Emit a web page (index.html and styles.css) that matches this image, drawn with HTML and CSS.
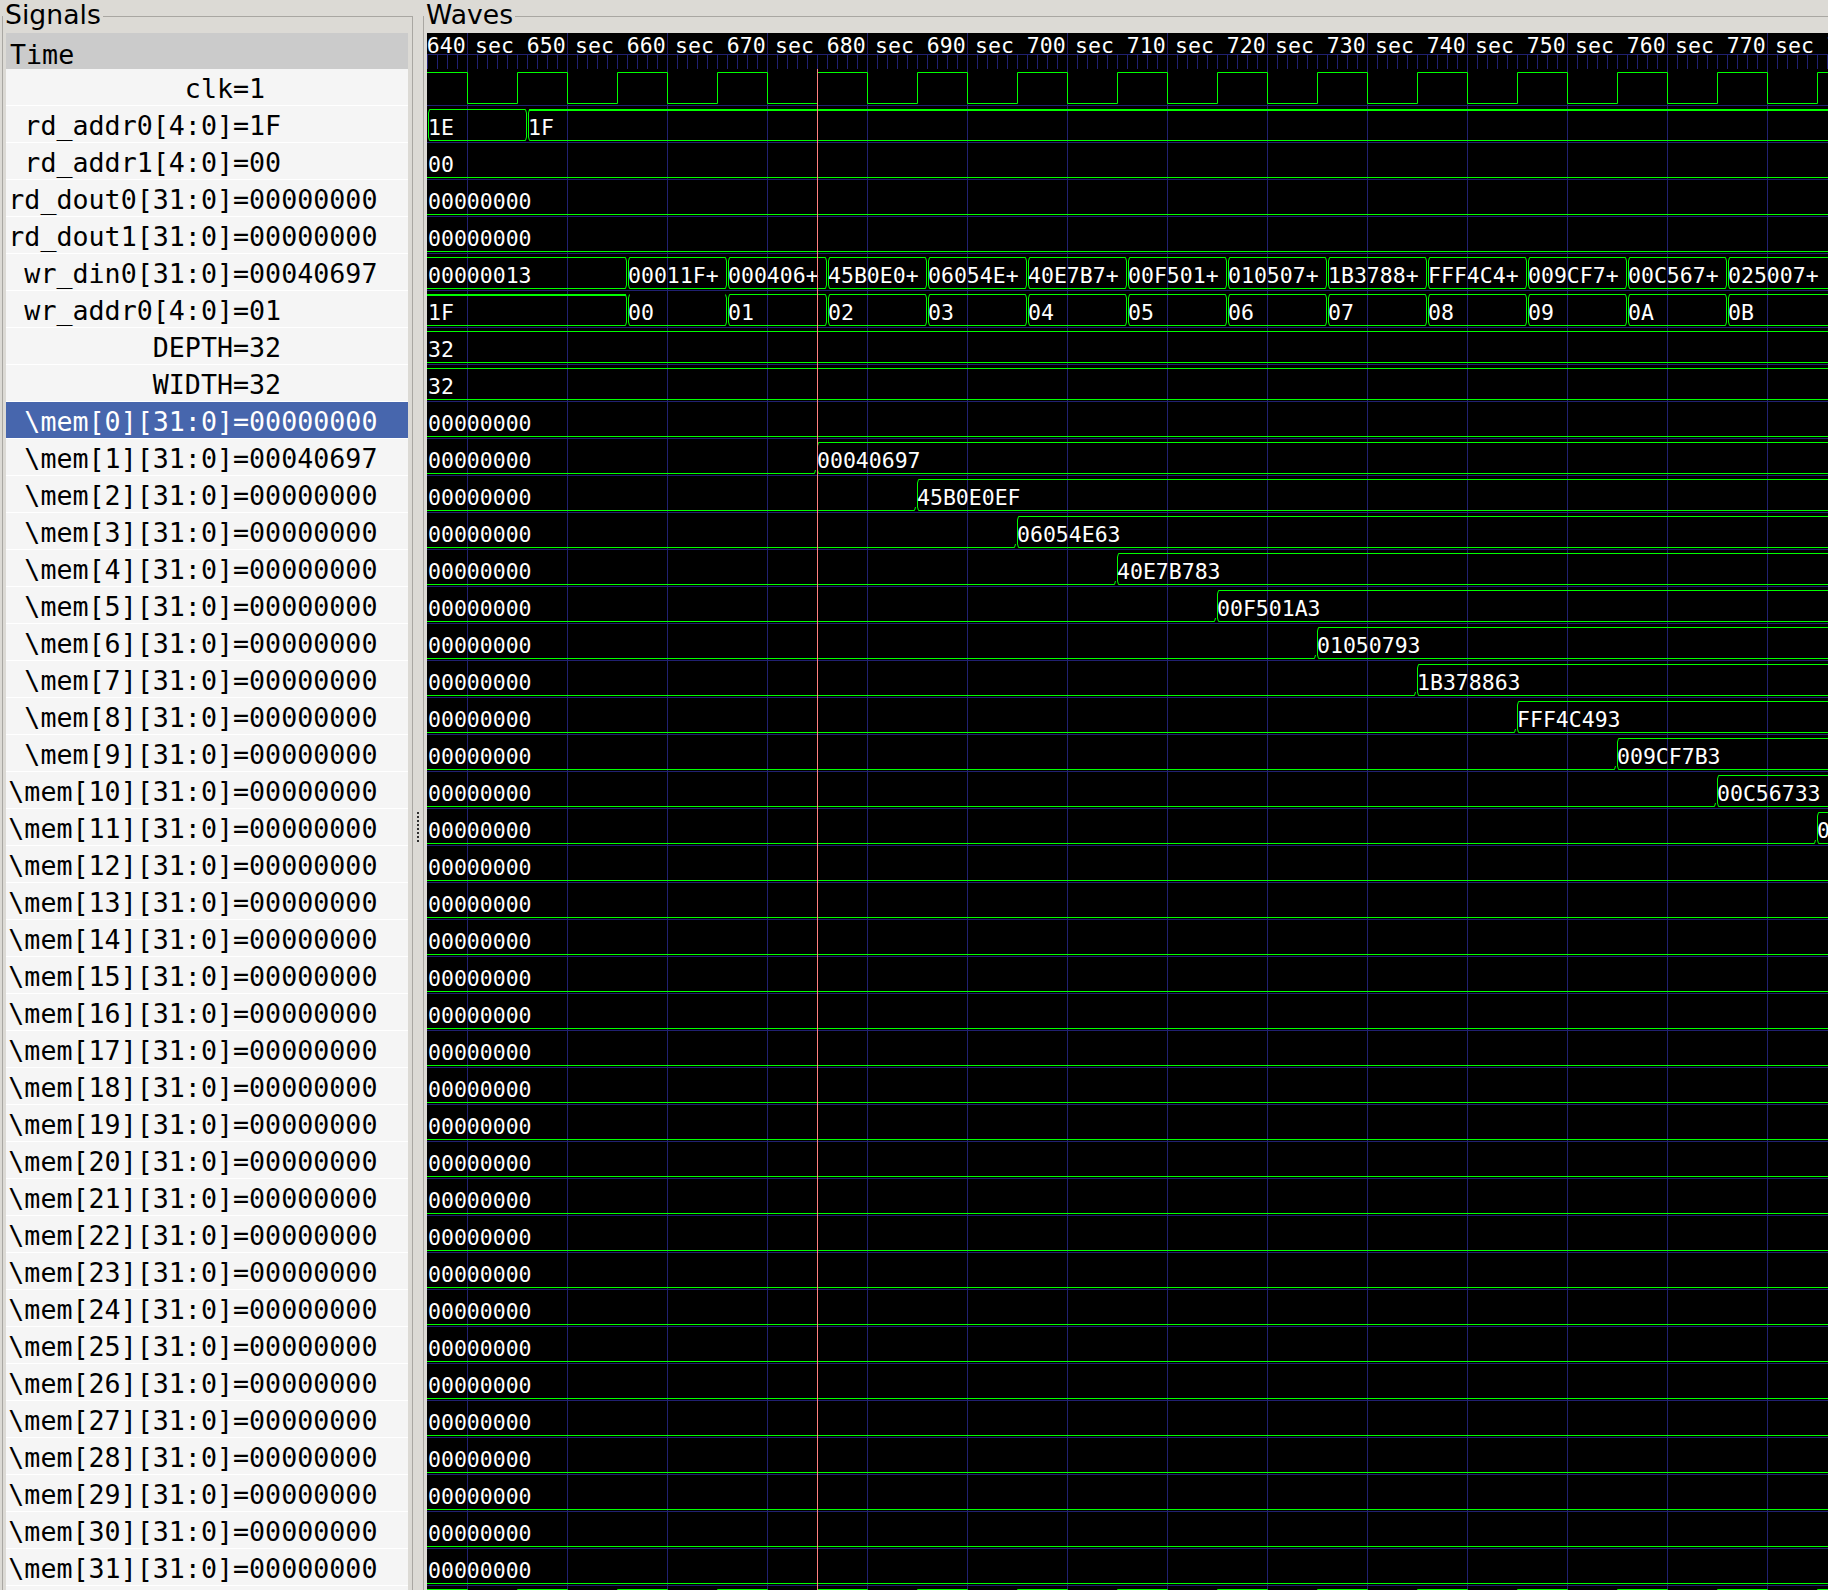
FILE: index.html
```html
<!DOCTYPE html>
<html>
<head>
<meta charset="utf-8">
<title>GTKWave</title>
<link rel="stylesheet" href="styles.css">
</head>
<body>
<div class="frame signals">
  <div class="frame-label">Signals</div>
  <div class="list">
    <div class="list-head">Time</div>
    <div class="sig"><span class="nm">clk</span><span>=1</span></div>
    <div class="sig"><span class="nm">rd_addr0[4:0]</span><span>=1F</span></div>
    <div class="sig"><span class="nm">rd_addr1[4:0]</span><span>=00</span></div>
    <div class="sig"><span class="nm">rd_dout0[31:0]</span><span>=00000000</span></div>
    <div class="sig"><span class="nm">rd_dout1[31:0]</span><span>=00000000</span></div>
    <div class="sig"><span class="nm">wr_din0[31:0]</span><span>=00040697</span></div>
    <div class="sig"><span class="nm">wr_addr0[4:0]</span><span>=01</span></div>
    <div class="sig"><span class="nm">DEPTH</span><span>=32</span></div>
    <div class="sig"><span class="nm">WIDTH</span><span>=32</span></div>
    <div class="sig sel"><span class="nm">\mem[0][31:0]</span><span>=00000000</span></div>
    <div class="sig"><span class="nm">\mem[1][31:0]</span><span>=00040697</span></div>
    <div class="sig"><span class="nm">\mem[2][31:0]</span><span>=00000000</span></div>
    <div class="sig"><span class="nm">\mem[3][31:0]</span><span>=00000000</span></div>
    <div class="sig"><span class="nm">\mem[4][31:0]</span><span>=00000000</span></div>
    <div class="sig"><span class="nm">\mem[5][31:0]</span><span>=00000000</span></div>
    <div class="sig"><span class="nm">\mem[6][31:0]</span><span>=00000000</span></div>
    <div class="sig"><span class="nm">\mem[7][31:0]</span><span>=00000000</span></div>
    <div class="sig"><span class="nm">\mem[8][31:0]</span><span>=00000000</span></div>
    <div class="sig"><span class="nm">\mem[9][31:0]</span><span>=00000000</span></div>
    <div class="sig"><span class="nm">\mem[10][31:0]</span><span>=00000000</span></div>
    <div class="sig"><span class="nm">\mem[11][31:0]</span><span>=00000000</span></div>
    <div class="sig"><span class="nm">\mem[12][31:0]</span><span>=00000000</span></div>
    <div class="sig"><span class="nm">\mem[13][31:0]</span><span>=00000000</span></div>
    <div class="sig"><span class="nm">\mem[14][31:0]</span><span>=00000000</span></div>
    <div class="sig"><span class="nm">\mem[15][31:0]</span><span>=00000000</span></div>
    <div class="sig"><span class="nm">\mem[16][31:0]</span><span>=00000000</span></div>
    <div class="sig"><span class="nm">\mem[17][31:0]</span><span>=00000000</span></div>
    <div class="sig"><span class="nm">\mem[18][31:0]</span><span>=00000000</span></div>
    <div class="sig"><span class="nm">\mem[19][31:0]</span><span>=00000000</span></div>
    <div class="sig"><span class="nm">\mem[20][31:0]</span><span>=00000000</span></div>
    <div class="sig"><span class="nm">\mem[21][31:0]</span><span>=00000000</span></div>
    <div class="sig"><span class="nm">\mem[22][31:0]</span><span>=00000000</span></div>
    <div class="sig"><span class="nm">\mem[23][31:0]</span><span>=00000000</span></div>
    <div class="sig"><span class="nm">\mem[24][31:0]</span><span>=00000000</span></div>
    <div class="sig"><span class="nm">\mem[25][31:0]</span><span>=00000000</span></div>
    <div class="sig"><span class="nm">\mem[26][31:0]</span><span>=00000000</span></div>
    <div class="sig"><span class="nm">\mem[27][31:0]</span><span>=00000000</span></div>
    <div class="sig"><span class="nm">\mem[28][31:0]</span><span>=00000000</span></div>
    <div class="sig"><span class="nm">\mem[29][31:0]</span><span>=00000000</span></div>
    <div class="sig"><span class="nm">\mem[30][31:0]</span><span>=00000000</span></div>
    <div class="sig"><span class="nm">\mem[31][31:0]</span><span>=00000000</span></div>
    <div class="sig"></div>
  </div>
</div>

<div class="handle"><div class="grip"></div></div>

<div class="frame waves">
  <div class="frame-label">Waves</div>
  <div class="canvas">
    <div class="timebar">
      <div class="tlabels"><span>sec 640</span><span>sec 650</span><span>sec 660</span><span>sec 670</span><span>sec 680</span><span>sec 690</span><span>sec 700</span><span>sec 710</span><span>sec 720</span><span>sec 730</span><span>sec 740</span><span>sec 750</span><span>sec 760</span><span>sec 770</span><span>sec 780</span></div>
      <div class="ticks"></div>
    </div>

    <div class="wrow"><svg class="wv" viewBox="427 0 1401 37" width="1401" height="37">
      <defs>
        <path id="seg" d="M2.5 3.5H98.5L99.5 7V31L98.5 34.5H2.5L1.5 31V7Z"/>
        <path id="zseg" d="M2.5 3.5L1.5 7V31L2.5 34.5H98.5L99.5 31V7L98.5 3.5"/>
      </defs>
      <path d="M420 3.5H467.5V34.5H517.5V3.5H567.5V34.5H617.5V3.5H667.5V34.5H717.5V3.5H767.5V34.5H817.5V3.5H867.5V34.5H917.5V3.5H967.5V34.5H1017.5V3.5H1067.5V34.5H1117.5V3.5H1167.5V34.5H1217.5V3.5H1267.5V34.5H1317.5V3.5H1367.5V34.5H1417.5V3.5H1467.5V34.5H1517.5V3.5H1567.5V34.5H1617.5V3.5H1667.5V34.5H1717.5V3.5H1767.5V34.5H1817.5V3.5H1830"/>
    </svg></div>

    <div class="wrow"><svg class="wv" viewBox="427 0 1401 37" width="1401" height="37">
      <use href="#seg" x="427"/>
      <path d="M1830 3.5H529.5L528.5 7V31L529.5 34.5H1830"/>
      <path class="thick" d="M529 4H1830"/>
      <text x="428" y="29">1E</text><text x="528" y="29">1F</text>
    </svg></div>

    <div class="wrow"><svg class="wv" viewBox="427 0 1401 37" width="1401" height="37">
      <path d="M420 34.5H1830"/><text x="428" y="29">00</text>
    </svg></div>
    <div class="wrow"><svg class="wv" viewBox="427 0 1401 37" width="1401" height="37">
      <path d="M420 34.5H1830"/><text x="428" y="29">00000000</text>
    </svg></div>
    <div class="wrow"><svg class="wv" viewBox="427 0 1401 37" width="1401" height="37">
      <path d="M420 34.5H1830"/><text x="428" y="29">00000000</text>
    </svg></div>

    <div class="wrow"><svg class="wv" viewBox="427 0 1401 37" width="1401" height="37">
      <path d="M420 3.5H625.5L626.5 7V31L625.5 34.5H420"/>
      <use href="#seg" x="627"/><use href="#seg" x="727"/><use href="#seg" x="827"/><use href="#seg" x="927"/><use href="#seg" x="1027"/><use href="#seg" x="1127"/><use href="#seg" x="1227"/><use href="#seg" x="1327"/><use href="#seg" x="1427"/><use href="#seg" x="1527"/><use href="#seg" x="1627"/>
      <path d="M1830 3.5H1729.5L1728.5 7V31L1729.5 34.5H1830"/>
      <text x="428" y="29">00000013</text><text x="628" y="29">00011F+</text><text x="728" y="29">000406+</text><text x="828" y="29">45B0E0+</text><text x="928" y="29">06054E+</text><text x="1028" y="29">40E7B7+</text><text x="1128" y="29">00F501+</text><text x="1228" y="29">010507+</text><text x="1328" y="29">1B3788+</text><text x="1428" y="29">FFF4C4+</text><text x="1528" y="29">009CF7+</text><text x="1628" y="29">00C567+</text><text x="1728" y="29">025007+</text>
    </svg></div>

    <div class="wrow"><svg class="wv" viewBox="427 0 1401 37" width="1401" height="37">
      <path d="M420 3.5H625.5L626.5 7V31L625.5 34.5H420"/>
      <path class="thick" d="M420 4H626"/>
      <use href="#zseg" x="627"/>
      <use href="#seg" x="727"/><use href="#seg" x="827"/><use href="#seg" x="927"/><use href="#seg" x="1027"/><use href="#seg" x="1127"/><use href="#seg" x="1227"/><use href="#seg" x="1327"/><use href="#seg" x="1427"/><use href="#seg" x="1527"/><use href="#seg" x="1627"/>
      <path d="M1830 3.5H1729.5L1728.5 7V31L1729.5 34.5H1830"/>
      <text x="428" y="29">1F</text><text x="628" y="29">00</text><text x="728" y="29">01</text><text x="828" y="29">02</text><text x="928" y="29">03</text><text x="1028" y="29">04</text><text x="1128" y="29">05</text><text x="1228" y="29">06</text><text x="1328" y="29">07</text><text x="1428" y="29">08</text><text x="1528" y="29">09</text><text x="1628" y="29">0A</text><text x="1728" y="29">0B</text>
    </svg></div>

    <div class="wrow"><svg class="wv" viewBox="427 0 1401 37" width="1401" height="37">
      <path d="M420 3.5H1830M420 34.5H1830"/><text x="428" y="29">32</text>
    </svg></div>
    <div class="wrow"><svg class="wv" viewBox="427 0 1401 37" width="1401" height="37">
      <path d="M420 3.5H1830M420 34.5H1830"/><text x="428" y="29">32</text>
    </svg></div>

    <div class="wrow"><svg class="wv" viewBox="427 0 1401 37" width="1401" height="37">
      <path d="M420 34.5H1830"/><text x="428" y="29">00000000</text>
    </svg></div>

    <div class="wrow"><svg class="wv" viewBox="427 0 1401 37" width="1401" height="37">
      <path d="M420 34.5H814.5L815.5 31"/><path d="M1830 3.5H818.5L817.5 7V31L818.5 34.5H1830"/>
      <text x="428" y="29">00000000</text><text x="817" y="29">00040697</text>
    </svg></div>
    <div class="wrow"><svg class="wv" viewBox="427 0 1401 37" width="1401" height="37">
      <path d="M420 34.5H914.5L915.5 31"/><path d="M1830 3.5H918.5L917.5 7V31L918.5 34.5H1830"/>
      <text x="428" y="29">00000000</text><text x="917" y="29">45B0E0EF</text>
    </svg></div>
    <div class="wrow"><svg class="wv" viewBox="427 0 1401 37" width="1401" height="37">
      <path d="M420 34.5H1014.5L1015.5 31"/><path d="M1830 3.5H1018.5L1017.5 7V31L1018.5 34.5H1830"/>
      <text x="428" y="29">00000000</text><text x="1017" y="29">06054E63</text>
    </svg></div>
    <div class="wrow"><svg class="wv" viewBox="427 0 1401 37" width="1401" height="37">
      <path d="M420 34.5H1114.5L1115.5 31"/><path d="M1830 3.5H1118.5L1117.5 7V31L1118.5 34.5H1830"/>
      <text x="428" y="29">00000000</text><text x="1117" y="29">40E7B783</text>
    </svg></div>
    <div class="wrow"><svg class="wv" viewBox="427 0 1401 37" width="1401" height="37">
      <path d="M420 34.5H1214.5L1215.5 31"/><path d="M1830 3.5H1218.5L1217.5 7V31L1218.5 34.5H1830"/>
      <text x="428" y="29">00000000</text><text x="1217" y="29">00F501A3</text>
    </svg></div>
    <div class="wrow"><svg class="wv" viewBox="427 0 1401 37" width="1401" height="37">
      <path d="M420 34.5H1314.5L1315.5 31"/><path d="M1830 3.5H1318.5L1317.5 7V31L1318.5 34.5H1830"/>
      <text x="428" y="29">00000000</text><text x="1317" y="29">01050793</text>
    </svg></div>
    <div class="wrow"><svg class="wv" viewBox="427 0 1401 37" width="1401" height="37">
      <path d="M420 34.5H1414.5L1415.5 31"/><path d="M1830 3.5H1418.5L1417.5 7V31L1418.5 34.5H1830"/>
      <text x="428" y="29">00000000</text><text x="1417" y="29">1B378863</text>
    </svg></div>
    <div class="wrow"><svg class="wv" viewBox="427 0 1401 37" width="1401" height="37">
      <path d="M420 34.5H1514.5L1515.5 31"/><path d="M1830 3.5H1518.5L1517.5 7V31L1518.5 34.5H1830"/>
      <text x="428" y="29">00000000</text><text x="1517" y="29">FFF4C493</text>
    </svg></div>
    <div class="wrow"><svg class="wv" viewBox="427 0 1401 37" width="1401" height="37">
      <path d="M420 34.5H1614.5L1615.5 31"/><path d="M1830 3.5H1618.5L1617.5 7V31L1618.5 34.5H1830"/>
      <text x="428" y="29">00000000</text><text x="1617" y="29">009CF7B3</text>
    </svg></div>
    <div class="wrow"><svg class="wv" viewBox="427 0 1401 37" width="1401" height="37">
      <path d="M420 34.5H1714.5L1715.5 31"/><path d="M1830 3.5H1718.5L1717.5 7V31L1718.5 34.5H1830"/>
      <text x="428" y="29">00000000</text><text x="1717" y="29">00C56733</text>
    </svg></div>
    <div class="wrow"><svg class="wv" viewBox="427 0 1401 37" width="1401" height="37">
      <path d="M420 34.5H1814.5L1815.5 31"/><path d="M1830 3.5H1818.5L1817.5 7V31L1818.5 34.5H1830"/>
      <text x="428" y="29">00000000</text><text x="1817" y="29">0</text>
    </svg></div>

    <div class="wrow"><svg class="wv" viewBox="427 0 1401 37" width="1401" height="37"><path d="M420 34.5H1830"/><text x="428" y="29">00000000</text></svg></div>
    <div class="wrow"><svg class="wv" viewBox="427 0 1401 37" width="1401" height="37"><path d="M420 34.5H1830"/><text x="428" y="29">00000000</text></svg></div>
    <div class="wrow"><svg class="wv" viewBox="427 0 1401 37" width="1401" height="37"><path d="M420 34.5H1830"/><text x="428" y="29">00000000</text></svg></div>
    <div class="wrow"><svg class="wv" viewBox="427 0 1401 37" width="1401" height="37"><path d="M420 34.5H1830"/><text x="428" y="29">00000000</text></svg></div>
    <div class="wrow"><svg class="wv" viewBox="427 0 1401 37" width="1401" height="37"><path d="M420 34.5H1830"/><text x="428" y="29">00000000</text></svg></div>
    <div class="wrow"><svg class="wv" viewBox="427 0 1401 37" width="1401" height="37"><path d="M420 34.5H1830"/><text x="428" y="29">00000000</text></svg></div>
    <div class="wrow"><svg class="wv" viewBox="427 0 1401 37" width="1401" height="37"><path d="M420 34.5H1830"/><text x="428" y="29">00000000</text></svg></div>
    <div class="wrow"><svg class="wv" viewBox="427 0 1401 37" width="1401" height="37"><path d="M420 34.5H1830"/><text x="428" y="29">00000000</text></svg></div>
    <div class="wrow"><svg class="wv" viewBox="427 0 1401 37" width="1401" height="37"><path d="M420 34.5H1830"/><text x="428" y="29">00000000</text></svg></div>
    <div class="wrow"><svg class="wv" viewBox="427 0 1401 37" width="1401" height="37"><path d="M420 34.5H1830"/><text x="428" y="29">00000000</text></svg></div>
    <div class="wrow"><svg class="wv" viewBox="427 0 1401 37" width="1401" height="37"><path d="M420 34.5H1830"/><text x="428" y="29">00000000</text></svg></div>
    <div class="wrow"><svg class="wv" viewBox="427 0 1401 37" width="1401" height="37"><path d="M420 34.5H1830"/><text x="428" y="29">00000000</text></svg></div>
    <div class="wrow"><svg class="wv" viewBox="427 0 1401 37" width="1401" height="37"><path d="M420 34.5H1830"/><text x="428" y="29">00000000</text></svg></div>
    <div class="wrow"><svg class="wv" viewBox="427 0 1401 37" width="1401" height="37"><path d="M420 34.5H1830"/><text x="428" y="29">00000000</text></svg></div>
    <div class="wrow"><svg class="wv" viewBox="427 0 1401 37" width="1401" height="37"><path d="M420 34.5H1830"/><text x="428" y="29">00000000</text></svg></div>
    <div class="wrow"><svg class="wv" viewBox="427 0 1401 37" width="1401" height="37"><path d="M420 34.5H1830"/><text x="428" y="29">00000000</text></svg></div>
    <div class="wrow"><svg class="wv" viewBox="427 0 1401 37" width="1401" height="37"><path d="M420 34.5H1830"/><text x="428" y="29">00000000</text></svg></div>
    <div class="wrow"><svg class="wv" viewBox="427 0 1401 37" width="1401" height="37"><path d="M420 34.5H1830"/><text x="428" y="29">00000000</text></svg></div>
    <div class="wrow"><svg class="wv" viewBox="427 0 1401 37" width="1401" height="37"><path d="M420 34.5H1830"/><text x="428" y="29">00000000</text></svg></div>
    <div class="wrow"><svg class="wv" viewBox="427 0 1401 37" width="1401" height="37"><path d="M420 34.5H1830"/><text x="428" y="29">00000000</text></svg></div>

    <div class="wrow"><svg class="wv" viewBox="427 0 1401 37" width="1401" height="37">
      <path d="M420 3.5H467.5V34.5H517.5V3.5H567.5V34.5H617.5V3.5H667.5V34.5H717.5V3.5H767.5V34.5H817.5V3.5H867.5V34.5H917.5V3.5H967.5V34.5H1017.5V3.5H1067.5V34.5H1117.5V3.5H1167.5V34.5H1217.5V3.5H1267.5V34.5H1317.5V3.5H1367.5V34.5H1417.5V3.5H1467.5V34.5H1517.5V3.5H1567.5V34.5H1617.5V3.5H1667.5V34.5H1717.5V3.5H1767.5V34.5H1817.5V3.5H1830"/>
    </svg></div>

    <div class="cursor"></div>
  </div>
</div>
</body>
</html>
```

FILE: styles.css
```css
html, body {
  margin: 0;
  padding: 0;
}

body {
  width: 1828px;
  height: 1590px;
  overflow: hidden;
  display: flex;
  align-items: flex-start;
  background: #dcdad5;
  font-family: "DejaVu Sans", sans-serif;
  color: #000;
}

.frame {
  position: relative;
  flex: none;
  margin-top: 16px;
  border: 1px solid #a9a7a2;
  border-bottom: none;
}

.frame-label {
  position: absolute;
  top: -18.5px;
  left: 0;
  padding: 0 2px;
  background: #dcdad5;
  font-family: "DejaVu Sans", sans-serif;
  font-size: 26.67px;
  line-height: normal;
  color: #000;
}

.signals {
  margin-left: 2px;
  width: 402px;
  padding: 16px 4px 0 3px;
}

.list {
  width: 402px;
  background: #f5f5f5;
  font-family: "DejaVu Sans Mono", monospace;
  font-size: 26.67px;
  line-height: normal;
}

.list-head {
  height: 36px;
  box-sizing: border-box;
  padding: 8px 0 0 4px;
  line-height: 28px;
  background: #cbcbcb;
}

.sig {
  display: flex;
  height: 37px;
  box-sizing: border-box;
  padding-top: 4px;
  border-bottom: 1px solid #ffffff;
  white-space: pre;
}

.sig .nm {
  flex: none;
  width: 227px;
  text-align: right;
}

.sig.sel {
  background: #4766ad;
  color: #ffffff;
}

.handle {
  flex: none;
  width: 10px;
  display: flex;
  justify-content: center;
  padding-top: 812px;
}

.grip {
  width: 2px;
  height: 32px;
  background: repeating-linear-gradient(to bottom, #2e2e2e 0 2px, transparent 2px 4px);
}

.waves {
  border-right: none;
  padding: 16px 0 0 3px;
}

.canvas {
  position: relative;
  width: 1401px;
  height: 1557px;
  overflow: hidden;
  background-color: #000;
  background-image: linear-gradient(90deg, transparent 40px, #202070 40px, #202070 41px, transparent 41px);
  background-size: 100px 100%;
}

.timebar {
  height: 36px;
}

.tlabels {
  display: flex;
  height: 21px;
  margin-left: -52px;
  color: #ffffff;
  font-family: "DejaVu Sans Mono", monospace;
  font-size: 21.5px;
  line-height: normal;
  white-space: pre;
}

.tlabels span {
  flex: 0 0 100px;
}

.ticks {
  height: 15px;
  box-sizing: border-box;
  border-top: 1px solid #202070;
  background-image: linear-gradient(90deg, #202070 1px, transparent 1px);
  background-size: 10px 100%;
}

.wrow {
  height: 37px;
  background: linear-gradient(#202070, #202070) left bottom / 100% 1px no-repeat;
}

.wv {
  display: block;
  fill: none;
  stroke: #00ff00;
  stroke-width: 1px;
}

.wv .thick {
  stroke-width: 2px;
}

.wv text {
  fill: #ffffff;
  stroke: none;
  font-family: "DejaVu Sans Mono", monospace;
  font-size: 21.5px;
}

.cursor {
  position: absolute;
  left: 390px;
  top: 36px;
  bottom: 0;
  width: 1px;
  background: #ff8080;
}
```
